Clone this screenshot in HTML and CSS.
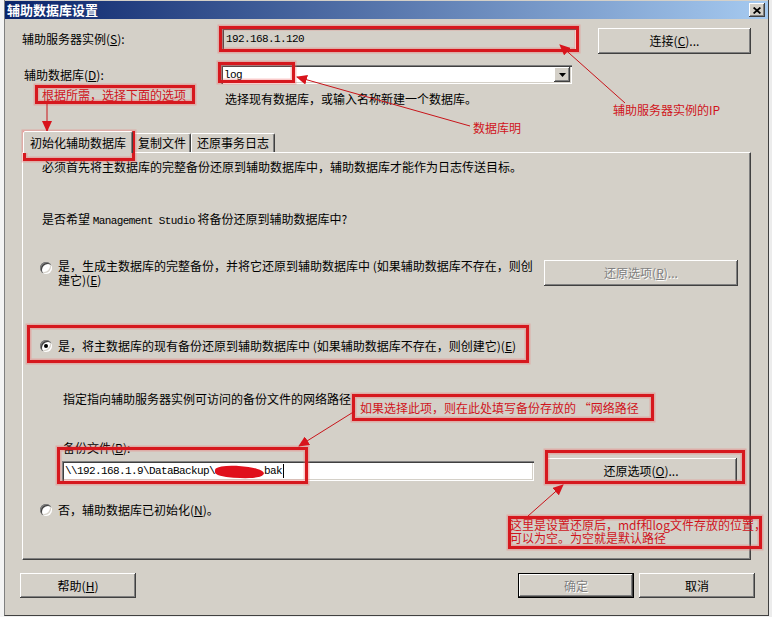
FILE: index.html
```html
<!DOCTYPE html>
<html lang="zh-CN">
<head>
<meta charset="utf-8">
<title>辅助数据库设置</title>
<link rel="stylesheet" href="styles.css">
</head>
<body>
<div class="screen">
  <div class="strip-left"></div>
  <div class="dialog">
    <div class="titlebar">
      <span class="title">辅助数据库设置</span>
      <span class="close-btn"><svg width="8" height="7" viewBox="0 0 8 7"><path d="M0.6 0.5 L7.4 6.5 M7.4 0.5 L0.6 6.5" stroke="#000" stroke-width="1.7" fill="none"/></svg></span>
    </div>
    <div class="body">
      <div class="row row-server">
        <label class="lab lab-server">辅助服务器实例(<u>S</u>):</label>
        <div class="field field-server"><span class="mono">192.168.1.120</span></div>
        <button class="btn btn-connect">连接(<u>C</u>)...</button>
      </div>
      <div class="row row-db">
        <label class="lab lab-db">辅助数据库(<u>D</u>):</label>
        <div class="field combo">
          <span class="mono">log</span>
          <span class="drop"><svg width="7" height="4" viewBox="0 0 7 4"><path d="M0 0 H7 L3.5 4 Z" fill="#000"/></svg></span>
        </div>
      </div>
      <div class="hint">选择现有数据库，或输入名称新建一个数据库。</div>
      <div class="tabs">
        <div class="tab active">初始化辅助数据库</div>
        <div class="tab">复制文件</div>
        <div class="tab">还原事务日志</div>
      </div>
      <div class="panel">
        <p class="txt intro">必须首先将主数据库的完整备份还原到辅助数据库中，辅助数据库才能作为日志传送目标。</p>
        <p class="txt question">是否希望 <span class="mono">Management Studio</span> 将备份还原到辅助数据库中?</p>
        <div class="opt opt1">
          <span class="radio"></span>
          <div class="opt-text">
            <div class="ln">是，生成主数据库的完整备份，并将它还原到辅助数据库中 (如果辅助数据库不存在，则创</div>
            <div class="ln">建它)(<u>E</u>)</div>
          </div>
          <button class="btn btn-restore disabled">还原选项(<u>R</u>)...</button>
        </div>
        <div class="opt opt2">
          <span class="radio checked"></span>
          <span class="opt-text">是，将主数据库的现有备份还原到辅助数据库中 (如果辅助数据库不存在，则创建它)(<u>E</u>)</span>
        </div>
        <p class="txt sub path-hint">指定指向辅助服务器实例可访问的备份文件的网络路径</p>
        <p class="txt sub file-label">备份文件(<u>B</u>):</p>
        <div class="file-row">
          <div class="field field-file"><span class="mono">\\192.168.1.9\DataBackup\</span><span class="scribble"></span><span class="mono">bak</span><span class="caret"></span></div>
          <button class="btn btn-restore2">还原选项(<u>O</u>)...</button>
        </div>
        <div class="opt opt3">
          <span class="radio"></span>
          <span class="opt-text">否，辅助数据库已初始化(<u>N</u>)。</span>
        </div>
      </div>
      <div class="footer">
        <button class="btn btn-foot">帮助(<u>H</u>)</button>
        <button class="btn btn-foot btn-default disabled">确定</button>
        <button class="btn btn-foot">取消</button>
      </div>
    </div>
  </div>
  <div class="strip-right"></div>

  <svg class="marks" width="772" height="617" viewBox="0 0 772 617">
    <defs>
      <marker id="ah" markerUnits="userSpaceOnUse" markerWidth="11" markerHeight="10" refX="10" refY="5" orient="auto">
        <path d="M0,0 L11,5 L0,10 Z" fill="#d8141c"/>
      </marker>
      <g id="boxes">
        <rect x="220.5" y="27.5" width="357" height="23"/>
        <rect x="219.5" y="63.5" width="74" height="18"/>
        <rect x="36.5" y="86.5" width="157" height="16"/>
        <rect x="24.5" y="132.5" width="109" height="27"/>
        <rect x="28.5" y="326.5" width="499" height="35"/>
        <rect x="353.5" y="395.5" width="299" height="24"/>
        <rect x="58.5" y="448.5" width="248" height="34"/>
        <rect x="546.5" y="451.5" width="197" height="31"/>
        <rect x="509.5" y="517.5" width="251" height="30"/>
      </g>
    </defs>
    <use href="#boxes" fill="none" stroke="#f06a6a" stroke-opacity="0.35" stroke-width="6"/>
    <use href="#boxes" fill="none" stroke="#d6181e" stroke-width="3"/>
    <g stroke="#c8141a" stroke-width="1" fill="none">
      <line x1="47" y1="104" x2="47" y2="131" marker-end="url(#ah)"/>
      <line x1="470" y1="126" x2="297" y2="77" marker-end="url(#ah)"/>
      <line x1="625" y1="103" x2="560" y2="45" marker-end="url(#ah)"/>
      <line x1="355" y1="411" x2="299" y2="446" marker-end="url(#ah)"/>
      <line x1="528" y1="516" x2="563" y2="485" marker-end="url(#ah)"/>
    </g>
  </svg>
  <div class="note n-select">根据所需，选择下面的选项</div>
  <div class="note n-dbname">数据库明</div>
  <div class="note n-ip">辅助服务器实例的IP</div>
  <div class="note n-path">如果选择此项，则在此处填写备份存放的 “网络路径</div>
  <div class="note n-restore">
    <div class="ln">这里是设置还原后，mdf和log文件存放的位置，</div>
    <div class="ln">可以为空。为空就是默认路径</div>
  </div>
</div>
</body>
</html>
```

FILE: styles.css
```css
* { box-sizing: border-box; }
html, body { margin: 0; padding: 0; }
body {
  width: 772px;
  height: 617px;
  overflow: hidden;
  background: #f0f0f0;
  font-family: "SimSun", "Noto Sans CJK SC", sans-serif;
  font-size: 12px;
  line-height: 14px;
  color: #000;
}
u { text-decoration: underline; text-underline-offset: 1px; }
.mono {
  font-family: "Liberation Mono", "DejaVu Sans Mono", monospace;
  font-size: 11px;
  letter-spacing: -0.6px;
}
.screen {
  position: relative;
  display: flex;
  width: 772px;
  height: 617px;
}
.strip-left {
  width: 4px;
  background: #f4f4f4;
}
.strip-right {
  flex: 1;
  background: #ececec;
}
.dialog {
  width: 765px;
  height: 616px;
  background: #d4d0c8;
  border-left: 1px solid #808080;
  border-right: 1px solid #404040;
  border-bottom: 1px solid #404040;
  padding-top: 1px;
  display: flex;
  flex-direction: column;
}
.titlebar {
  height: 18px;
  display: flex;
  align-items: center;
  padding-left: 2px;
  background: linear-gradient(to right, #0a246a, #a6caf0);
}
.title {
  color: #fff;
  font-weight: bold;
  font-size: 13px;
  line-height: 16px;
}
.close-btn {
  margin-left: auto;
  margin-right: 3px;
  width: 16px;
  height: 14px;
  background: #d4d0c8;
  display: flex;
  align-items: center;
  justify-content: center;
  box-shadow: inset -1px -1px #404040, inset 1px 1px #fff, inset -2px -2px #808080;
}
.body {
  padding-left: 17px;
  display: flex;
  flex-direction: column;
}
.row { display: flex; align-items: flex-start; }
.row-server { margin-top: 9px; }
.lab-server { width: 200px; line-height: 22px; }
.field {
  background: #fff;
  box-shadow: inset 1px 1px #808080, inset 2px 2px #404040, inset -1px -1px #fff, inset -2px -2px #d4d0c8;
  display: flex;
  align-items: center;
}
.field-server {
  width: 354px;
  height: 22px;
  background: #d4d0c8;
  padding-left: 4px;
}
.btn {
  font-family: inherit;
  font-size: 12px;
  line-height: 14px;
  color: #000;
  padding: 0;
  border: none;
  background: #d4d0c8;
  box-shadow: inset -1px -1px #404040, inset 1px 1px #fff, inset -2px -2px #808080;
  display: flex;
  align-items: center;
  justify-content: center;
}
.btn.disabled {
  color: #808080;
  text-shadow: 1px 1px #fff;
}
.btn-connect {
  margin-left: 22px;
  width: 153px;
  height: 26px;
}
.row-db { margin-top: 11px; }
.lab-db { margin-left: 2px; width: 197px; line-height: 19px; }
.combo {
  width: 351px;
  height: 19px;
  padding-left: 3px;
}
.drop {
  margin-left: auto;
  margin-right: 2px;
  width: 16px;
  height: 15px;
  background: #d4d0c8;
  box-shadow: inset -1px -1px #404040, inset 1px 1px #fff, inset -2px -2px #808080;
  display: flex;
  align-items: center;
  justify-content: center;
}
.hint {
  margin-top: 8px;
  margin-left: 203px;
}
.tabs {
  margin-top: 25px;
  height: 21px;
  display: flex;
  align-items: flex-end;
  padding-left: 1px;
}
.tab {
  height: 19px;
  padding-top: 2px;
  text-align: center;
  border-top: 1px solid #fff;
  border-left: 1px solid #fff;
  border-right: 1px solid #404040;
  border-radius: 2px 2px 0 0;
  box-shadow: inset -1px 0 #808080;
  background: #d4d0c8;
}
.tab:nth-child(1) { width: 110px; }
.tab:nth-child(2) { width: 58px; }
.tab:nth-child(3) { width: 84px; }
.tab.active {
  position: relative;
  z-index: 2;
  height: 22px;
  margin-bottom: -1px;
  padding-top: 4px;
}
.panel {
  width: 729px;
  height: 408px;
  border-top: 1px solid #fff;
  border-left: 1px solid #fff;
  border-right: 1px solid #404040;
  border-bottom: 1px solid #404040;
  box-shadow: inset -1px -1px #808080;
  padding: 7px 12px 0 17px;
  display: flex;
  flex-direction: column;
}
.txt { margin: 0; }
.intro, .question { margin-left: 2px; }
.question { margin-top: 38px; }
.opt { display: flex; align-items: flex-start; }
.radio {
  position: relative;
  flex: none;
  width: 12px;
  height: 12px;
  border-radius: 50%;
  background: #fff;
  box-shadow: inset 1px 1px #808080, inset 2px 2px #404040, inset -1px -1px #fff, inset -2px -2px #d4d0c8;
}
.radio.checked::after {
  content: "";
  position: absolute;
  left: 4px;
  top: 4px;
  width: 4px;
  height: 4px;
  border-radius: 50%;
  background: #000;
}
.opt-text { margin-left: 6px; white-space: nowrap; }
.ln {
  line-height: 13px;
  white-space: nowrap;
}
.opt1 { margin-top: 31px; height: 28px; }
.opt1 .ln { line-height: 14px; }
.opt1 .radio { margin-top: 3px; }
.btn-restore {
  margin-left: auto;
  margin-top: 1px;
  width: 194px;
  height: 26px;
}
.opt2 { margin-top: 52px; }
.opt2 .radio, .opt3 .radio { margin-top: 1px; }
.sub { margin-left: 23px; }
.path-hint { margin-top: 39px; }
.file-label { margin-top: 35px; }
.file-row {
  margin-top: 3px;
  height: 26px;
  display: flex;
  align-items: center;
}
.field-file {
  margin-left: 22px;
  width: 472px;
  height: 20px;
  padding-left: 3px;
}
.scribble {
  display: inline-block;
  width: 49px;
  height: 12px;
  margin-top: 2px;
  background: #e0101c;
  border-radius: 45% 55% 50% 40%;
  transform: rotate(3deg);
}
.caret {
  display: inline-block;
  width: 1px;
  height: 14px;
  background: #000;
  margin-left: 1px;
}
.btn-restore2 {
  margin-left: 11px;
  width: 192px;
  height: 26px;
}
.opt3 { margin-top: 19px; }
.footer {
  margin-top: 13px;
  display: flex;
  gap: 5px;
  padding-right: 13px;
  margin-left: -2px;
}
.btn-foot { width: 116px; height: 25px; }
.btn-foot:first-child { margin-right: auto; }
.btn-default {
  box-shadow: inset 0 0 0 1px #000, inset -2px -2px #404040, inset 2px 2px #fff, inset -3px -3px #808080;
}
.marks {
  position: absolute;
  left: 0;
  top: 0;
  pointer-events: none;
}
.note {
  position: absolute;
  color: #d0141c;
  white-space: nowrap;
  line-height: 14px;
}
.n-select { left: 42px; top: 88px; }
.n-dbname { left: 473px; top: 121px; }
.n-ip { left: 613px; top: 103px; }
.n-path { left: 360px; top: 401px; }
.n-restore { left: 510px; top: 518px; }
```
